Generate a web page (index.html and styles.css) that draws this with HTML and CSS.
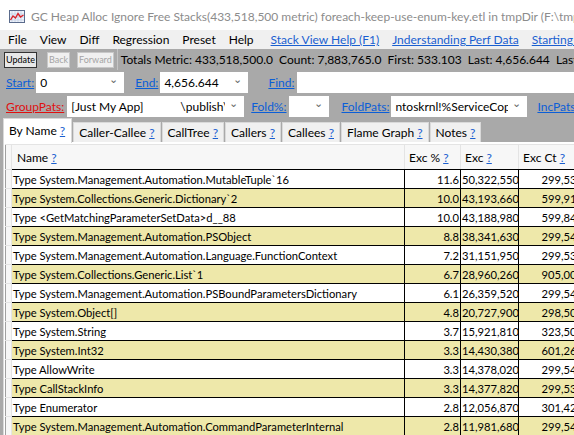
FILE: index.html
```html
<!DOCTYPE html>
<html>
<head>
<meta charset="UTF-8">
<title>GC Heap Alloc Ignore Free Stacks</title>
<link rel="stylesheet" href="styles.css">
</head>
<body>
    <div class="titlebar">
        <svg class="app-icon" width="16" height="13" viewBox="0 0 16 13">
            <rect x="0.5" y="0.5" width="15" height="12" fill="#eef3fb" stroke="#5a6b8c"/>
            <path d="M3 1v11M6 1v11M9 1v11M12 1v11M1 4h14M1 7h14M1 10h14" stroke="#b9c6dd" stroke-width="0.6"/>
            <polyline points="1.5,10 4,6 6.5,8 9,3.5 11.5,7 14.5,5" fill="none" stroke="#d9232a" stroke-width="1.4"/>
        </svg>
        <span class="title-text">GC Heap Alloc Ignore Free Stacks(433,518,500 metric) foreach-keep-use-enum-key.etl in tmpDir (F:\tmpDir)</span>
    </div>

    <div class="menubar">
        <span class="menu-item">File</span>
        <span class="menu-item">View</span>
        <span class="menu-item">Diff</span>
        <span class="menu-item">Regression</span>
        <span class="menu-item">Preset</span>
        <span class="menu-item">Help</span>
        <a class="menu-link">Stack View Help (F1)</a>
        <a class="menu-link">Jnderstanding Perf Data</a>
        <a class="menu-link">Starting an Analysis</a>
    </div>

    <div class="toolbar">
        <button class="tool-button active">Update</button>
        <button class="tool-button disabled">Back</button>
        <button class="tool-button disabled">Forward</button>
        <div class="totals">Totals Metric: 433,518,500.0&nbsp; Count: 7,883,765.0&nbsp; First: 533.103&nbsp; Last: 4,656.644&nbsp; Last-First: 4,123.541</div>
    </div>

    <div class="filter-row">
        <a class="field-link">Start:</a>
        <div class="combo start-combo"><span>0</span><span class="chev">&#8964;</span></div>
        <a class="field-link end-link">End:</a>
        <div class="combo end-combo"><span>4,656.644</span><span class="chev">&#8964;</span></div>
        <a class="field-link find-link">Find:</a>
        <div class="text-box find-box"></div>
    </div>

    <div class="filter-row">
        <a class="field-link red">GroupPats:</a>
        <div class="combo group-combo"><span class="clip">[Just My App]&nbsp;&nbsp;&nbsp;&nbsp;&nbsp;&nbsp;&nbsp;&nbsp;&nbsp;&nbsp;&nbsp;&nbsp;\publish\</span><span class="chev">&#8964;</span></div>
        <a class="field-link fold-link">Fold%:</a>
        <div class="combo fold-combo"><span></span><span class="chev">&#8964;</span></div>
        <a class="field-link foldpats-link">FoldPats:</a>
        <div class="combo foldpats-combo"><span class="clip">ntoskrnl!%ServiceCopyEnd</span><span class="chev">&#8964;</span></div>
        <a class="field-link incpats-link">IncPats:</a>
    </div>

    <div class="tabs">
        <div class="tab selected">By Name <a class="help">?</a></div>
        <div class="tab">Caller-Callee <a class="help">?</a></div>
        <div class="tab">CallTree <a class="help">?</a></div>
        <div class="tab">Callers <a class="help">?</a></div>
        <div class="tab">Callees <a class="help">?</a></div>
        <div class="tab">Flame Graph <a class="help">?</a></div>
        <div class="tab">Notes <a class="help">?</a></div>
    </div>

    <div class="panel">
        <table class="grid">
            <colgroup>
                <col class="col-rowhead">
                <col class="col-name">
                <col class="col-pct">
                <col class="col-exc">
                <col class="col-ct">
            </colgroup>
            <thead>
                <tr>
                    <th class="rowhead"></th>
                    <th class="name-head">Name <a class="help">?</a></th>
                    <th>Exc % <a class="help">?</a></th>
                    <th>Exc <a class="help">?</a></th>
                    <th>Exc Ct <a class="help">?</a></th>
                </tr>
            </thead>
            <tbody>
                <tr><td class="rowhead"></td><td>Type System.Management.Automation.MutableTuple`16</td><td class="num">11.6</td><td class="num">50,322,550</td><td class="num">299,539</td></tr>
                <tr class="alt"><td class="rowhead"></td><td>Type System.Collections.Generic.Dictionary`2</td><td class="num">10.0</td><td class="num">43,193,660</td><td class="num">599,912</td></tr>
                <tr><td class="rowhead"></td><td>Type &lt;GetMatchingParameterSetData&gt;d__88</td><td class="num">10.0</td><td class="num">43,188,980</td><td class="num">599,847</td></tr>
                <tr class="alt"><td class="rowhead"></td><td>Type System.Management.Automation.PSObject</td><td class="num">8.8</td><td class="num">38,341,630</td><td class="num">299,544</td></tr>
                <tr><td class="rowhead"></td><td>Type System.Management.Automation.Language.FunctionContext</td><td class="num">7.2</td><td class="num">31,151,950</td><td class="num">299,538</td></tr>
                <tr class="alt"><td class="rowhead"></td><td>Type System.Collections.Generic.List`1</td><td class="num">6.7</td><td class="num">28,960,260</td><td class="num">905,008</td></tr>
                <tr><td class="rowhead"></td><td>Type System.Management.Automation.PSBoundParametersDictionary</td><td class="num">6.1</td><td class="num">26,359,520</td><td class="num">299,540</td></tr>
                <tr class="alt"><td class="rowhead"></td><td>Type System.Object[]</td><td class="num">4.8</td><td class="num">20,727,900</td><td class="num">298,501</td></tr>
                <tr><td class="rowhead"></td><td>Type System.String</td><td class="num">3.7</td><td class="num">15,921,810</td><td class="num">323,502</td></tr>
                <tr class="alt"><td class="rowhead"></td><td>Type System.Int32</td><td class="num">3.3</td><td class="num">14,430,380</td><td class="num">601,266</td></tr>
                <tr><td class="rowhead"></td><td>Type AllowWrite</td><td class="num">3.3</td><td class="num">14,378,020</td><td class="num">299,542</td></tr>
                <tr class="alt"><td class="rowhead"></td><td>Type CallStackInfo</td><td class="num">3.3</td><td class="num">14,377,820</td><td class="num">299,538</td></tr>
                <tr><td class="rowhead"></td><td>Type Enumerator</td><td class="num">2.8</td><td class="num">12,056,870</td><td class="num">301,420</td></tr>
                <tr class="alt"><td class="rowhead"></td><td>Type System.Management.Automation.CommandParameterInternal</td><td class="num">2.8</td><td class="num">11,981,680</td><td class="num">299,542</td></tr>
            </tbody>
        </table>
    </div>
</body>
</html>
```

FILE: styles.css
```css
/* Window chrome */
body {
    margin: 0;
    padding: 0;
    width: 574px;
    height: 435px;
    overflow: hidden;
    font-family: "Segoe UI", "Lato", "Liberation Sans", sans-serif;
    font-size: 12px;
    color: #000;
    background-color: #a9a9a9;
}
a {
    color: #0b5ed7;
    text-decoration: underline;
    cursor: pointer;
}
.titlebar {
    height: 30px;
    background-color: #fff;
    display: flex;
    align-items: center;
    padding-left: 9px;
    white-space: nowrap;
    overflow: hidden;
}
.app-icon {
    flex-shrink: 0;
    margin-right: 6px;
    margin-top: 2px;
}
.title-text {
    color: #8c8c8c;
    font-size: 12px;
    margin-top: 2px;
}
.menubar {
    height: 19px;
    background-color: #f0f0f0;
    display: flex;
    align-items: center;
    white-space: nowrap;
    overflow: hidden;
    padding-left: 8px;
}
.menu-item {
    margin-right: 13px;
}
.menu-link {
    margin-left: 4px;
    margin-right: 9px;
    color: #1a5fd0;
}

/* Toolbar */
.toolbar {
    height: 21px;
    display: flex;
    align-items: center;
    padding-left: 4px;
    white-space: nowrap;
    overflow: hidden;
}
.tool-button {
    font-family: inherit;
    font-size: 9px;
    height: 16px;
    padding: 0 1px;
    margin-right: 7px;
    border: 1px solid #c8c8c8;
    background-color: #f0f0f0;
    color: #a4a4a4;
    line-height: 12px;
}
.tool-button.active {
    border: 1px solid #333;
    background-color: #e8e8e8;
    color: #000;
    margin-right: 10px;
}
.tool-button.disabled + .tool-button.disabled {
    margin-right: 3px;
}
.totals {
    height: 21px;
    line-height: 21px;
    padding-left: 3px;
    border-left: 1px solid #c4c4c4;
}

/* Filter rows */
.filter-row {
    height: 24px;
    display: flex;
    align-items: center;
    white-space: nowrap;
    overflow: hidden;
    padding-left: 6px;
}
.field-link {
    margin-right: 2px;
}
.field-link.red {
    color: #e01010;
}
.combo {
    height: 21px;
    background-color: #fff;
    display: flex;
    align-items: center;
    justify-content: space-between;
    padding: 0 6px 0 4px;
    box-sizing: border-box;
    flex-shrink: 0;
}
.combo .clip {
    overflow: hidden;
    white-space: nowrap;
    flex: 1;
    min-width: 0;
}
.chev {
    color: #666;
    font-size: 11px;
    line-height: 8px;
    margin-left: 4px;
    padding-bottom: 6px;
}
.start-combo {
    width: 88px;
}
.end-link {
    margin-left: 11px;
}
.end-combo {
    width: 88px;
}
.find-link {
    margin-left: 20px;
}
.text-box {
    height: 21px;
    background-color: #fff;
    flex: 1;
    margin-left: 1px;
}
.group-combo {
    width: 177px;
    margin-left: 1px;
}
.fold-link {
    margin-left: 7px;
}
.fold-combo {
    width: 40px;
}
.foldpats-link {
    margin-left: 13px;
}
.foldpats-combo {
    width: 136px;
}
.incpats-link {
    margin-left: 10px;
}

/* Tabs */
.tabs {
    height: 24px;
    display: flex;
    align-items: flex-end;
    padding-left: 3px;
    white-space: nowrap;
}
.tab {
    height: 20px;
    line-height: 20px;
    padding: 0 5px;
    margin-right: 1px;
    background-color: #f0f0f0;
    border: 1px solid #d9d9d9;
    border-bottom: none;
    box-sizing: border-box;
}
.tab.selected {
    height: 25px;
    line-height: 24px;
    background-color: #fff;
    padding: 0 6px 0 5px;
    margin-bottom: -1px;
    position: relative;
}
.help {
    color: #1a5fd0;
}

/* Grid */
.panel {
    background-color: #fff;
    border-left: 1px solid #d9d9d9;
    margin-left: 3px;
    padding: 2px 0 0 1px;
    height: 300px;
}
.grid {
    border-collapse: collapse;
    table-layout: fixed;
    width: 580px;
    border-left: 1px solid #a0a0a0;
    border-top: 1px solid #e4e4e4;
}
.col-rowhead {
    width: 6px;
}
.col-name {
    width: 393px;
}
.col-pct {
    width: 56px;
}
.col-exc {
    width: 58px;
}
.col-ct {
    width: 66px;
}
.grid th {
    height: 24px;
    background-color: #f7f7f7;
    font-weight: normal;
    text-align: left;
    padding: 0 0 0 4px;
    border-right: 1px solid #e4e4e4;
    border-bottom: 1px solid #000;
    white-space: nowrap;
}
.grid th.name-head {
    padding-left: 5px;
}
.grid td {
    height: 18px;
    padding: 0 1px;
    font-size: 11.2px;
    border-right: 1px solid #000;
    border-bottom: 1px solid #000;
    white-space: nowrap;
    overflow: hidden;
}
.grid .rowhead {
    background-color: #f7f7f7;
    border-right: 1px solid #e4e4e4;
    border-bottom: 1px solid #e4e4e4;
    padding: 0;
}
.grid td.num {
    text-align: right;
}
.grid tr.alt td {
    background-color: #eee8aa;
}
.grid tr.alt td.rowhead {
    background-color: #f7f7f7;
}
```
